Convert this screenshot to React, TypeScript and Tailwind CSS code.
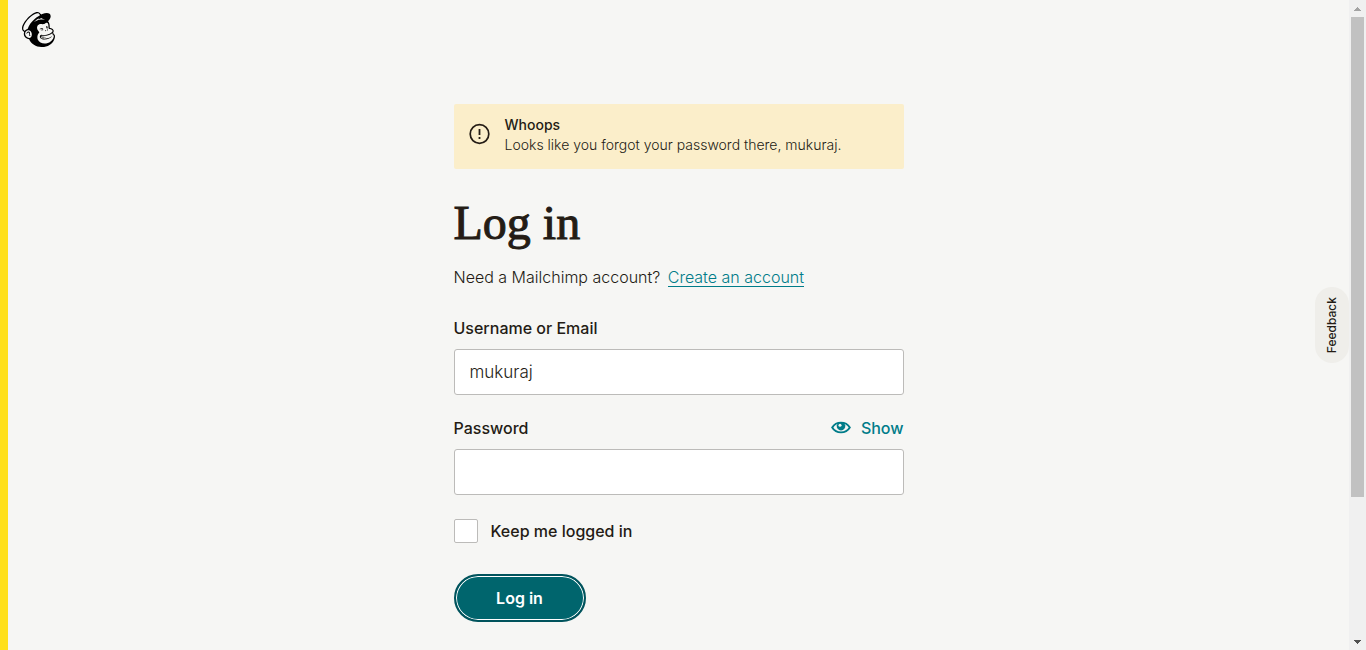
import { useState } from 'react';
import { SiMailchimp } from 'react-icons/si';

function AlertIcon() {
  return (
    <svg viewBox="0 0 22 22" className="size-[22px] shrink-0" fill="none" aria-hidden="true">
      <circle cx="10.5" cy="11" r="9.3" stroke="#241c15" strokeWidth="1.7" />
      <path d="M10.5 6v6M10.5 14v2" stroke="#241c15" strokeWidth="1.8" />
    </svg>
  );
}

function EyeIcon() {
  return (
    <svg viewBox="0 0 20 14" className="h-[14px] w-5 shrink-0" aria-hidden="true">
      <path
        d="M1.2 6.5C3.2 3.2 6.3 1.6 10 1.6s6.8 1.6 8.8 4.9c-2 3.3-5.1 4.9-8.8 4.9s-6.8-1.6-8.8-4.9Z"
        fill="none"
        stroke="#007c89"
        strokeWidth="1.9"
      />
      <path d="M5.8 4.2a4.3 4.3 0 1 0 8.4 0A4.3 4.3 0 0 0 12 1.6H8a4.3 4.3 0 0 0-2.2 2.6Z" fill="#007c89" />
      <circle cx="9" cy="4.2" r="1.5" fill="#f6f6f4" />
    </svg>
  );
}

function ScrollRail() {
  return (
    <div className="flex w-[17px] shrink-0 flex-col bg-[#f0f0f0]" aria-hidden="true">
      <div className="flex h-[17px] items-center justify-center">
        <svg viewBox="0 0 7 4" className="h-1 w-[7px]" shapeRendering="crispEdges">
          <path d="M3 0h1v1h1v1h1v1h1v1H0V3h1V2h1V1h1z" fill="#a3a3a3" />
        </svg>
      </div>
      <div className="flex-1 px-0.5">
        <div className="h-[78%] bg-[#c1c1c1]" />
      </div>
      <div className="flex h-[17px] items-center justify-center">
        <svg viewBox="0 0 7 4" className="h-1 w-[7px]" shapeRendering="crispEdges">
          <path d="M0 0h7v1H6v1H5v1H4v1H3V3H2V2H1V1H0z" fill="#505050" />
        </svg>
      </div>
    </div>
  );
}

export default function App() {
  const [username, setUsername] = useState('mukuraj');
  const [password, setPassword] = useState('');
  const [visible, setVisible] = useState(false);

  return (
    <div className="flex min-h-screen bg-[#f6f6f4] font-['Inter',sans-serif] text-base text-[#241c15]">
      <div className="relative flex min-w-0 flex-1 flex-col border-l-8 border-[#ffe01b]">
        <header className="flex px-[13px] pt-3">
          <a href="#home" aria-label="Mailchimp" className="text-black">
            <SiMailchimp className="size-[35px]" />
          </a>
        </header>

        <main className="mx-auto mt-[57px] w-full max-w-[450px]">
          <div role="alert" className="flex gap-3.5 rounded-xs bg-[#fbeeca] pt-[11px] pr-3.5 pb-3.5 pl-[15px] text-sm leading-5">
            <span className="pt-2">
              <AlertIcon />
            </span>
            <div>
              <p className="font-medium">Whoops</p>
              <p className="font-light">Looks like you forgot your password there, mukuraj.</p>
            </div>
          </div>

          <h1 className="mt-7 font-['Liberation_Serif',serif] text-5xl leading-13 [-webkit-text-stroke:1px_#241c15]">
            Log in
          </h1>

          <p className="mt-4 leading-6 font-light">
            Need a Mailchimp account?{' '}
            <a
              href="#signup"
              className="ml-[3px] inline-block border-b border-[#007c89] leading-[18px] text-[#007c89]"
            >
              Create an account
            </a>
          </p>

          <form onSubmit={(e) => e.preventDefault()}>
            <label htmlFor="username" className="mt-[27px] block leading-6 font-medium">
              Username or Email
            </label>
            <input
              id="username"
              type="text"
              value={username}
              onChange={(e) => setUsername(e.target.value)}
              className="mt-[9px] block h-[46px] w-full rounded-[3px] border border-[#bcbbb9] bg-white px-[15px] text-[17px] font-light outline-none focus:border-[#007c89]"
            />

            <div className="mt-[21px] flex items-center justify-between leading-6 font-medium">
              <label htmlFor="password">Password</label>
              <button
                type="button"
                onClick={() => setVisible(!visible)}
                className="flex cursor-pointer items-center gap-2.5 text-[#007c89]"
              >
                <EyeIcon />
                {visible ? 'Hide' : 'Show'}
              </button>
            </div>
            <input
              id="password"
              type={visible ? 'text' : 'password'}
              value={password}
              onChange={(e) => setPassword(e.target.value)}
              className="mt-[9px] block h-[46px] w-full rounded-[3px] border border-[#bcbbb9] bg-white px-[15px] text-[17px] font-light outline-none focus:border-[#007c89]"
            />

            <div className="mt-6 flex items-center gap-[13px] leading-6 font-medium">
              <input
                id="remember"
                type="checkbox"
                className="size-6 appearance-none rounded-xs border border-[#bcbbb9] bg-white checked:bg-[#007c89]"
              />
              <label htmlFor="remember">Keep me logged in</label>
            </div>

            <button
              type="submit"
              className="mt-[31px] h-12 w-33 cursor-pointer rounded-full border-2 border-[#00535c] bg-[#00656d] font-semibold text-white inset-ring inset-ring-white"
            >
              Log in
            </button>
          </form>
        </main>

        <button
          type="button"
          className="absolute top-[287px] right-0 flex h-[76px] w-[34px] cursor-pointer items-center justify-center rounded-full bg-[#efeeea] text-xs font-medium"
        >
          <span className="rotate-180 [writing-mode:vertical-rl]">Feedback</span>
        </button>
      </div>
      <ScrollRail />
    </div>
  );
}
